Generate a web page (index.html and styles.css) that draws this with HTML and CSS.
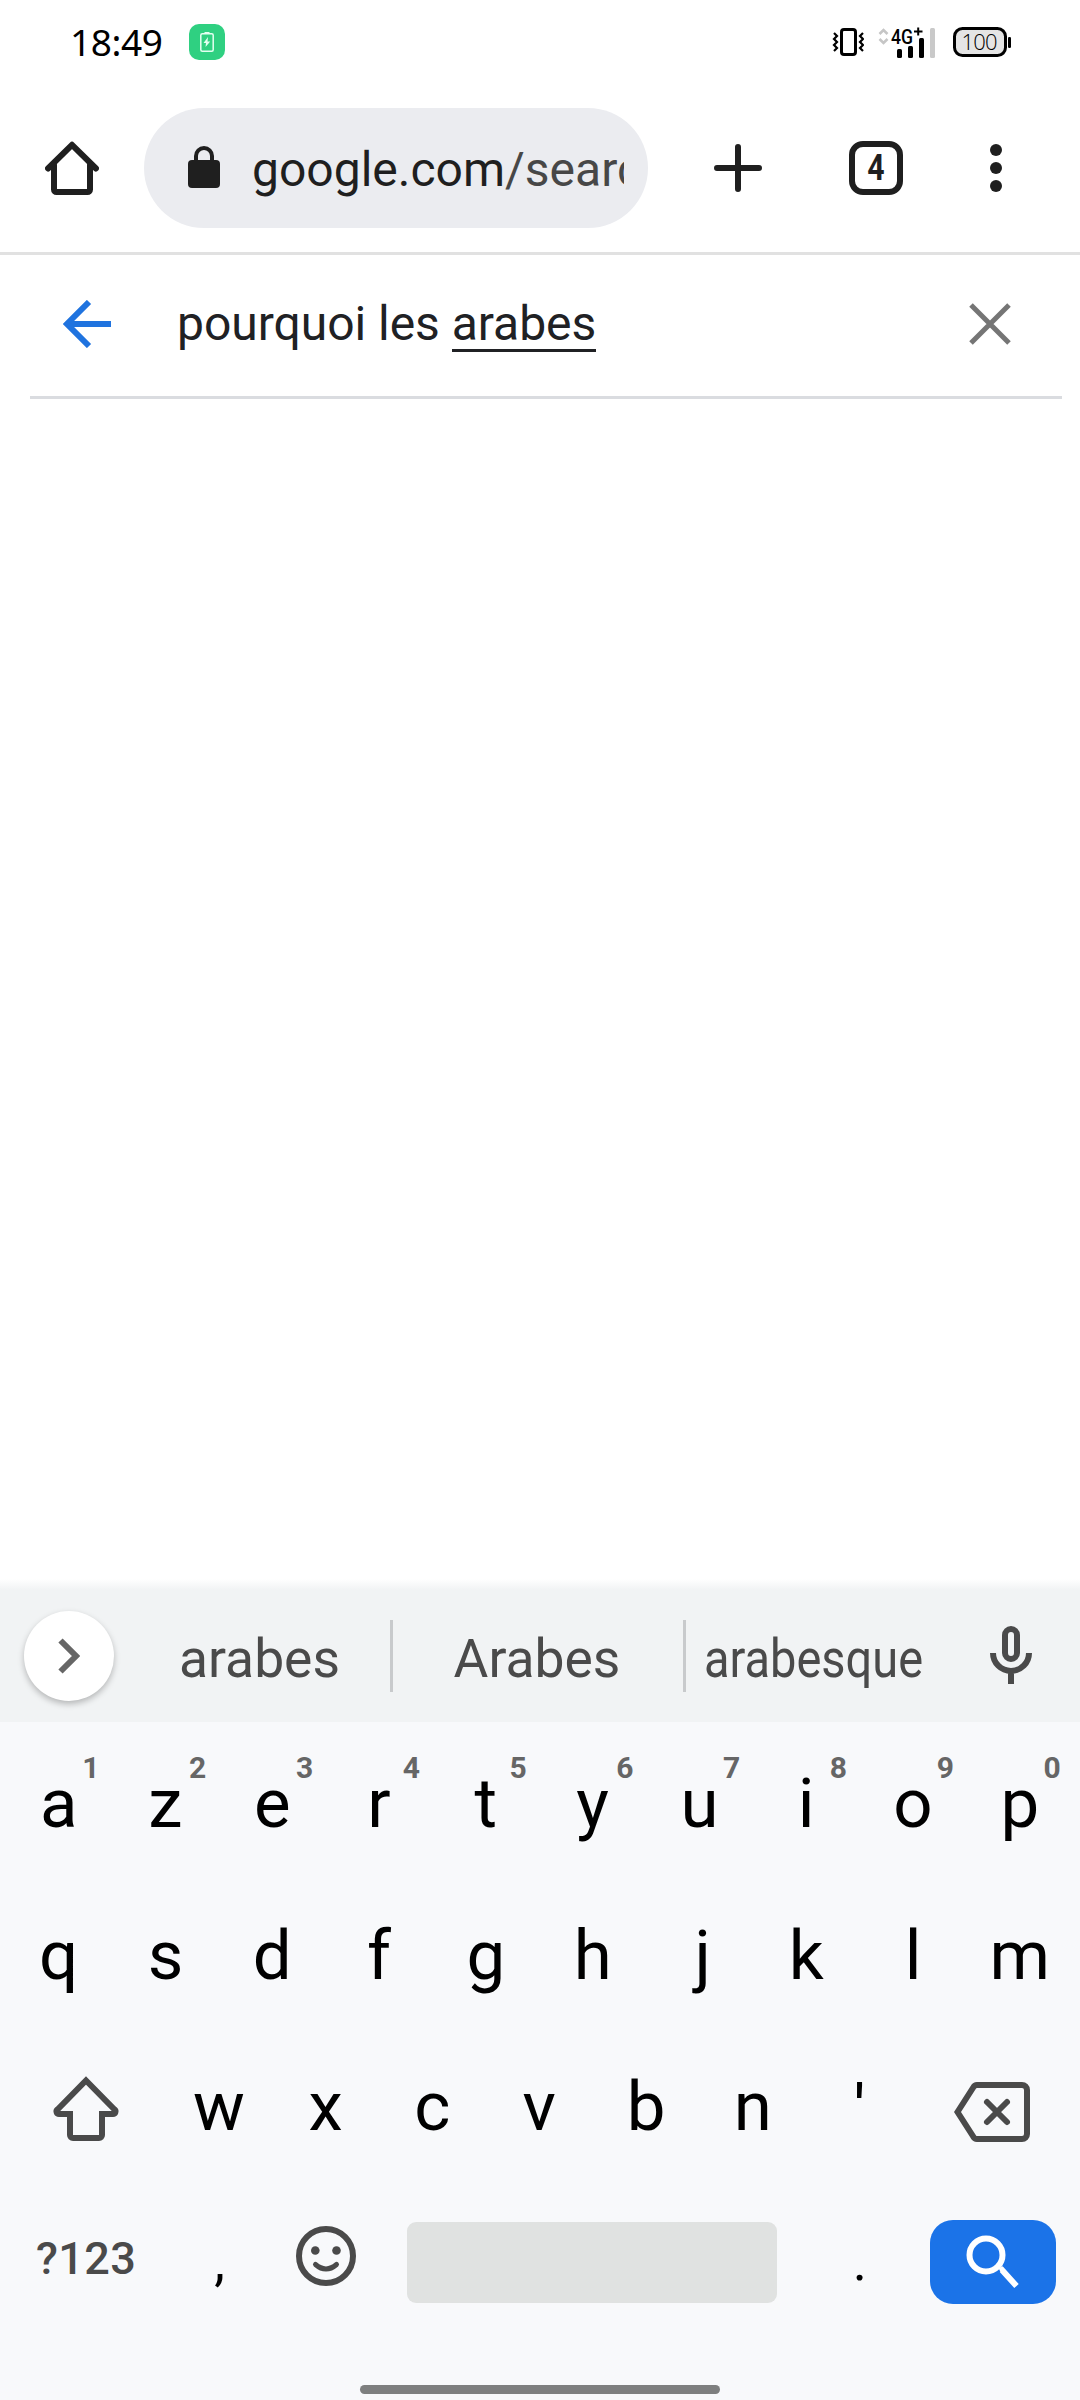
FILE: index.html
```html
<!DOCTYPE html>
<html lang="fr">
<head>
<meta charset="utf-8">
<title>google.com</title>
<link rel="stylesheet" href="styles.css">
</head>
<body>
<div class="screen">
  <header class="status">
    <span class="clock">18:49</span>
    <svg class="charge" width="36" height="36" viewBox="0 0 36 36"><rect width="36" height="36" rx="10" fill="#2fd081"/><rect x="11.800" y="9.800" width="12.400" height="17.400" rx="1.500" fill="none" stroke="#e4fff1" stroke-width="1.500"/><path d="M15.500 8h5v2h-5zM19 13l-4.500 6H17l-.5 4 4.700-5.500h-2.700z" fill="#e4fff1"/></svg>
    <svg class="vibrate" width="32" height="30" viewBox="0 0 32 30"><rect x="9.500" y="2.500" width="14" height="25" rx="2.500" fill="none" stroke="#000" stroke-width="3"/><path d="M2 6l3 3-3 3 3 3-3 3 3 3-3 3M31 6l-3 3 3 3-3 3 3 3-3 3 3 3" fill="none" stroke="#000" stroke-width="2.200"/></svg>
    <svg class="signal" width="58" height="34" viewBox="0 0 58 34"><path d="M1.500 9l4-4 4 4M1.500 14l4 4 4-4" fill="none" stroke="#c6c6c6" stroke-width="2.600"/><text class="net" x="13" y="18.500" textLength="22" lengthAdjust="spacingAndGlyphs">4G</text><path d="M36 6.500h8.500M40.200 2.500v8" stroke="#000" stroke-width="2"/><rect x="19" y="24" width="5" height="9" rx="1.500"/><rect x="30" y="21" width="5" height="12" rx="1.500"/><rect x="41" y="13" width="5" height="20" rx="1.500"/><rect x="52" y="3" width="5" height="30" rx="1.500" fill="#c9c9c9"/></svg>
    <svg class="battery" width="58" height="30" viewBox="0 0 58 30"><rect x="1.500" y="1.500" width="51" height="27" rx="8" fill="#e5e5e5" stroke="#000" stroke-width="3"/><rect x="55" y="10" width="3" height="11" rx="1.300"/><text class="level" x="8.500" y="22.500" textLength="36">100</text></svg>
  </header>

  <nav class="toolbar">
    <svg class="home" width="54" height="54" viewBox="0 0 54 54" fill="none" stroke="#1f1f1f" stroke-width="6" stroke-linecap="round" stroke-linejoin="round"><path d="M3 27.500L27 3.800l24 23.700"/><path d="M9 24v24.500a2.500 2.500 0 0 0 2.500 2.500h31a2.500 2.500 0 0 0 2.500-2.500V24"/></svg>
    <div class="pill">
      <svg class="lock" width="32" height="42" viewBox="0 0 32 42"><rect y="14" width="32" height="28" rx="4" fill="#1f1f1f"/><path d="M8 17v-7a8 8 0 0 1 16 0v7" fill="none" stroke="#1f1f1f" stroke-width="4"/></svg>
      <span class="url">google.com<span class="path">/search</span></span>
    </div>
    <svg class="plus" width="48" height="48" viewBox="0 0 48 48"><path d="M24 3v42M3 24h42" stroke="#1f1f1f" stroke-width="6" stroke-linecap="round"/></svg>
    <span class="tabs"><span class="count">4</span></span>
    <svg class="more" width="12" height="48" viewBox="0 0 12 48" fill="#1f1f1f"><circle cx="6" cy="6" r="6"/><circle cx="6" cy="24" r="6"/><circle cx="6" cy="42" r="6"/></svg>
  </nav>

  <div class="search">
    <svg width="48" height="48" viewBox="0 0 48 48" fill="none" stroke="#1f73df" stroke-width="6"><path d="M26 2L4 24l22 22M4 24h44"/></svg>
    <span class="query">pourquoi les <span class="composing">arabes</span></span>
    <svg class="clear" width="42" height="42" viewBox="0 0 42 42"><path d="M2 2l38 38M40 2L2 40" stroke="#757575" stroke-width="5"/></svg>
  </div>

  <main class="page"></main>

  <section class="keyboard">
    <div class="suggestions">
      <span class="expand"><svg width="22" height="36" viewBox="0 0 22 36"><path d="M2.500 2.500L18 18 2.500 33.500" fill="none" stroke="#666" stroke-width="6"/></svg></span>
      <span class="word first">arabes</span>
      <span class="word middle">Arabes</span>
      <span class="word last"><span class="squeeze">arabesque</span></span>
      <svg class="mic" width="42" height="58" viewBox="0 0 42 58" fill="none" stroke="#4a4a4a" stroke-width="6"><rect x="15" y="3" width="12" height="30" rx="6"/><path d="M3 27a18 18 0 0 0 36 0M21 45v13"/></svg>
    </div>
    <div class="keys">
      <div class="row">
        <span class="key">a<sup>1</sup></span><span class="key">z<sup>2</sup></span><span class="key">e<sup>3</sup></span><span class="key">r<sup>4</sup></span><span class="key">t<sup>5</sup></span><span class="key">y<sup>6</sup></span><span class="key">u<sup>7</sup></span><span class="key">i<sup>8</sup></span><span class="key">o<sup>9</sup></span><span class="key">p<sup>0</sup></span>
      </div>
      <div class="row">
        <span class="key">q</span><span class="key">s</span><span class="key">d</span><span class="key">f</span><span class="key">g</span><span class="key">h</span><span class="key j">j</span><span class="key">k</span><span class="key">l</span><span class="key">m</span>
      </div>
      <div class="row">
        <span class="key wide"><svg class="shift" width="68" height="65" viewBox="0 0 68 65"><path d="M34 4.500L62.500 33.500a2.500 2.500 0 0 1-1.500 4.500H50v21a3 3 0 0 1-3 3H21a3 3 0 0 1-3-3V38H7a2.500 2.500 0 0 1-1.500-4.500z" fill="none" stroke="#4a4a4a" stroke-width="6"/></svg></span>
        <span class="key">w</span><span class="key">x</span><span class="key">c</span><span class="key">v</span><span class="key">b</span><span class="key">n</span><span class="key quote">'</span>
        <span class="key wide"><svg class="erase" width="76" height="60" viewBox="0 0 76 60" fill="none" stroke="#4a4a4a" stroke-width="6"><path d="M3.500 30L19.500 5a4 4 0 0 1 3.500-2h45a5 5 0 0 1 5 5v44a5 5 0 0 1-5 5H23a4 4 0 0 1-3.500-2z"/><path d="M33 20l20 20M53 20L33 40" stroke-linecap="round"/></svg></span>
      </div>
      <div class="row">
        <span class="key wide symbols">?123</span>
        <span class="key punct">,</span>
        <span class="key"><svg class="emoji" width="60" height="60" viewBox="0 0 60 60"><circle cx="30" cy="30" r="27" fill="none" stroke="#4a4a4a" stroke-width="6"/><circle cx="19.300" cy="24.500" r="4.300" fill="#4a4a4a"/><circle cx="40.500" cy="24.500" r="4.300" fill="#4a4a4a"/><path d="M19.500 38.500q10.500 9 21 0" fill="none" stroke="#4a4a4a" stroke-width="5" stroke-linecap="round"/></svg></span>
        <span class="space"></span>
        <span class="key punct dot">.</span>
        <span class="go"><svg width="54" height="54" viewBox="0 0 54 54" fill="none" stroke="#fff" stroke-width="6"><circle cx="20" cy="20" r="16.500"/><path d="M34 36l2-1 14.500 16" stroke-width="6"/></svg></span>
      </div>
    </div>
    <div class="handle"></div>
  </section>
</div>
</body>
</html>
```

FILE: styles.css
```css
* { box-sizing: border-box; }
body { margin: 0; background: #fff; font-family: Roboto, "Liberation Sans", sans-serif; }
svg { display: block; flex: none; }
.screen { width: 1080px; height: 2400px; display: flex; flex-direction: column; overflow: hidden; }

/* status bar */
.status { height: 84px; display: flex; align-items: center; padding: 0 69px 0 70px; }
.clock { width: 119px; font: 37px/42px "Noto Sans", sans-serif; letter-spacing: -.4px; color: #000; white-space: nowrap; }
.vibrate { margin-left: 607px; }
.signal { margin-left: 14px; margin-top: -1px; }
.battery { margin-left: 17px; }
.net { font: 500 20px Roboto, sans-serif; }
.level { font: 300 22px "Open Sans", sans-serif; }

/* browser toolbar */
.toolbar { height: 171px; display: flex; align-items: center; padding-left: 45px; border-bottom: 3px solid #e1e1e1; }
.pill { width: 504px; height: 120px; margin-left: 45px; border-radius: 60px; background: #ebecf0; display: flex; align-items: center; padding: 0 24px 0 44px; }
.lock { margin-top: -2px; }
.url { flex: 1; margin-left: 32px; padding-top: 3px; overflow: hidden; white-space: nowrap; font-size: 48px; line-height: 60px; color: #1f1f1f; }
.path { color: #474747; }
.plus { margin-left: 66px; }
.tabs { width: 54px; height: 54px; margin-left: 87px; border: 6px solid #1f1f1f; border-radius: 14px; font-size: 36px; font-weight: 700; line-height: 43px; text-align: center; color: #1f1f1f; }
.count { display: block; transform: scaleX(.84); }
.more { margin-left: 87px; }

/* query line */
.search { height: 144px; margin: 0 18px 0 30px; padding: 0 51px 3px 33px; display: flex; align-items: center; border-bottom: 3px solid #dadce0; }
.query { flex: 1; margin-left: 66px; font-size: 48px; line-height: 60px; letter-spacing: -.03px; color: #202124; white-space: nowrap; }
.composing { display: inline-block; line-height: 51px; border-bottom: 3px solid #202124; }
.page { flex: 1; }

/* keyboard */
.keyboard { height: 821px; display: flex; flex-direction: column; background: #f8f9fb; }
.suggestions { height: 143px; padding: 11px 48px 0 24px; display: flex; align-items: center; background: linear-gradient(#fff, #f1f3f4 11px); }
.expand { width: 90px; height: 90px; border-radius: 50%; background: #fff; box-shadow: 0 3px 6px rgba(0, 0, 0, .25); display: flex; align-items: center; justify-content: center; }
.word { height: 72px; font-size: 53.400px; line-height: 77px; text-align: center; color: #4a4a4a; white-space: nowrap; }
.first { width: 279px; padding-left: 15px; border-right: 3px solid #c8cacc; }
.middle { width: 293px; padding-right: 2px; border-right: 3px solid #c8cacc; }
.last { width: 256px; display: flex; justify-content: center; }
.squeeze { transform: scaleX(.88); }
.mic { margin: -2px 0 0 48px; }
.keys { padding: 6px 6px 0; }
.row { height: 151.500px; display: flex; align-items: center; }
.key { position: relative; width: 106.800px; height: 100%; padding-right: 1.500px; display: flex; align-items: center; justify-content: center; font-size: 69px; color: #000; }
.key sup { position: absolute; left: 50%; margin-left: 22px; top: 22px; width: 19px; text-align: center; font-size: 30px; line-height: 35px; font-weight: 700; color: #666; }
.j { padding: 0 0 0 5px; }
.quote { padding-top: 8px; }
.wide { width: 160.200px; padding: 0; }
.shift { margin-top: 3px; }
.erase { margin: 11px 3px 0 0; }
.symbols { font-size: 45px; font-weight: 500; color: #4a4a4a; letter-spacing: .4px; }
.punct { font-size: 54px; padding: 6px 0 0; }
.emoji { margin-top: -4px; }
.space { width: 370px; height: 81px; margin: 9px 0 0 27.600px; border-radius: 9px; background: #e0e2e1; }
.dot { margin-left: 29px; }
.go { width: 126px; height: 84px; margin: 8px 0 0 17px; border-radius: 23px; background: #1b73e8; display: flex; align-items: center; padding-left: 36px; }
.handle { width: 360px; height: 9px; margin: auto auto 6px; border-radius: 5px; background: #7e7f7f; }
```
